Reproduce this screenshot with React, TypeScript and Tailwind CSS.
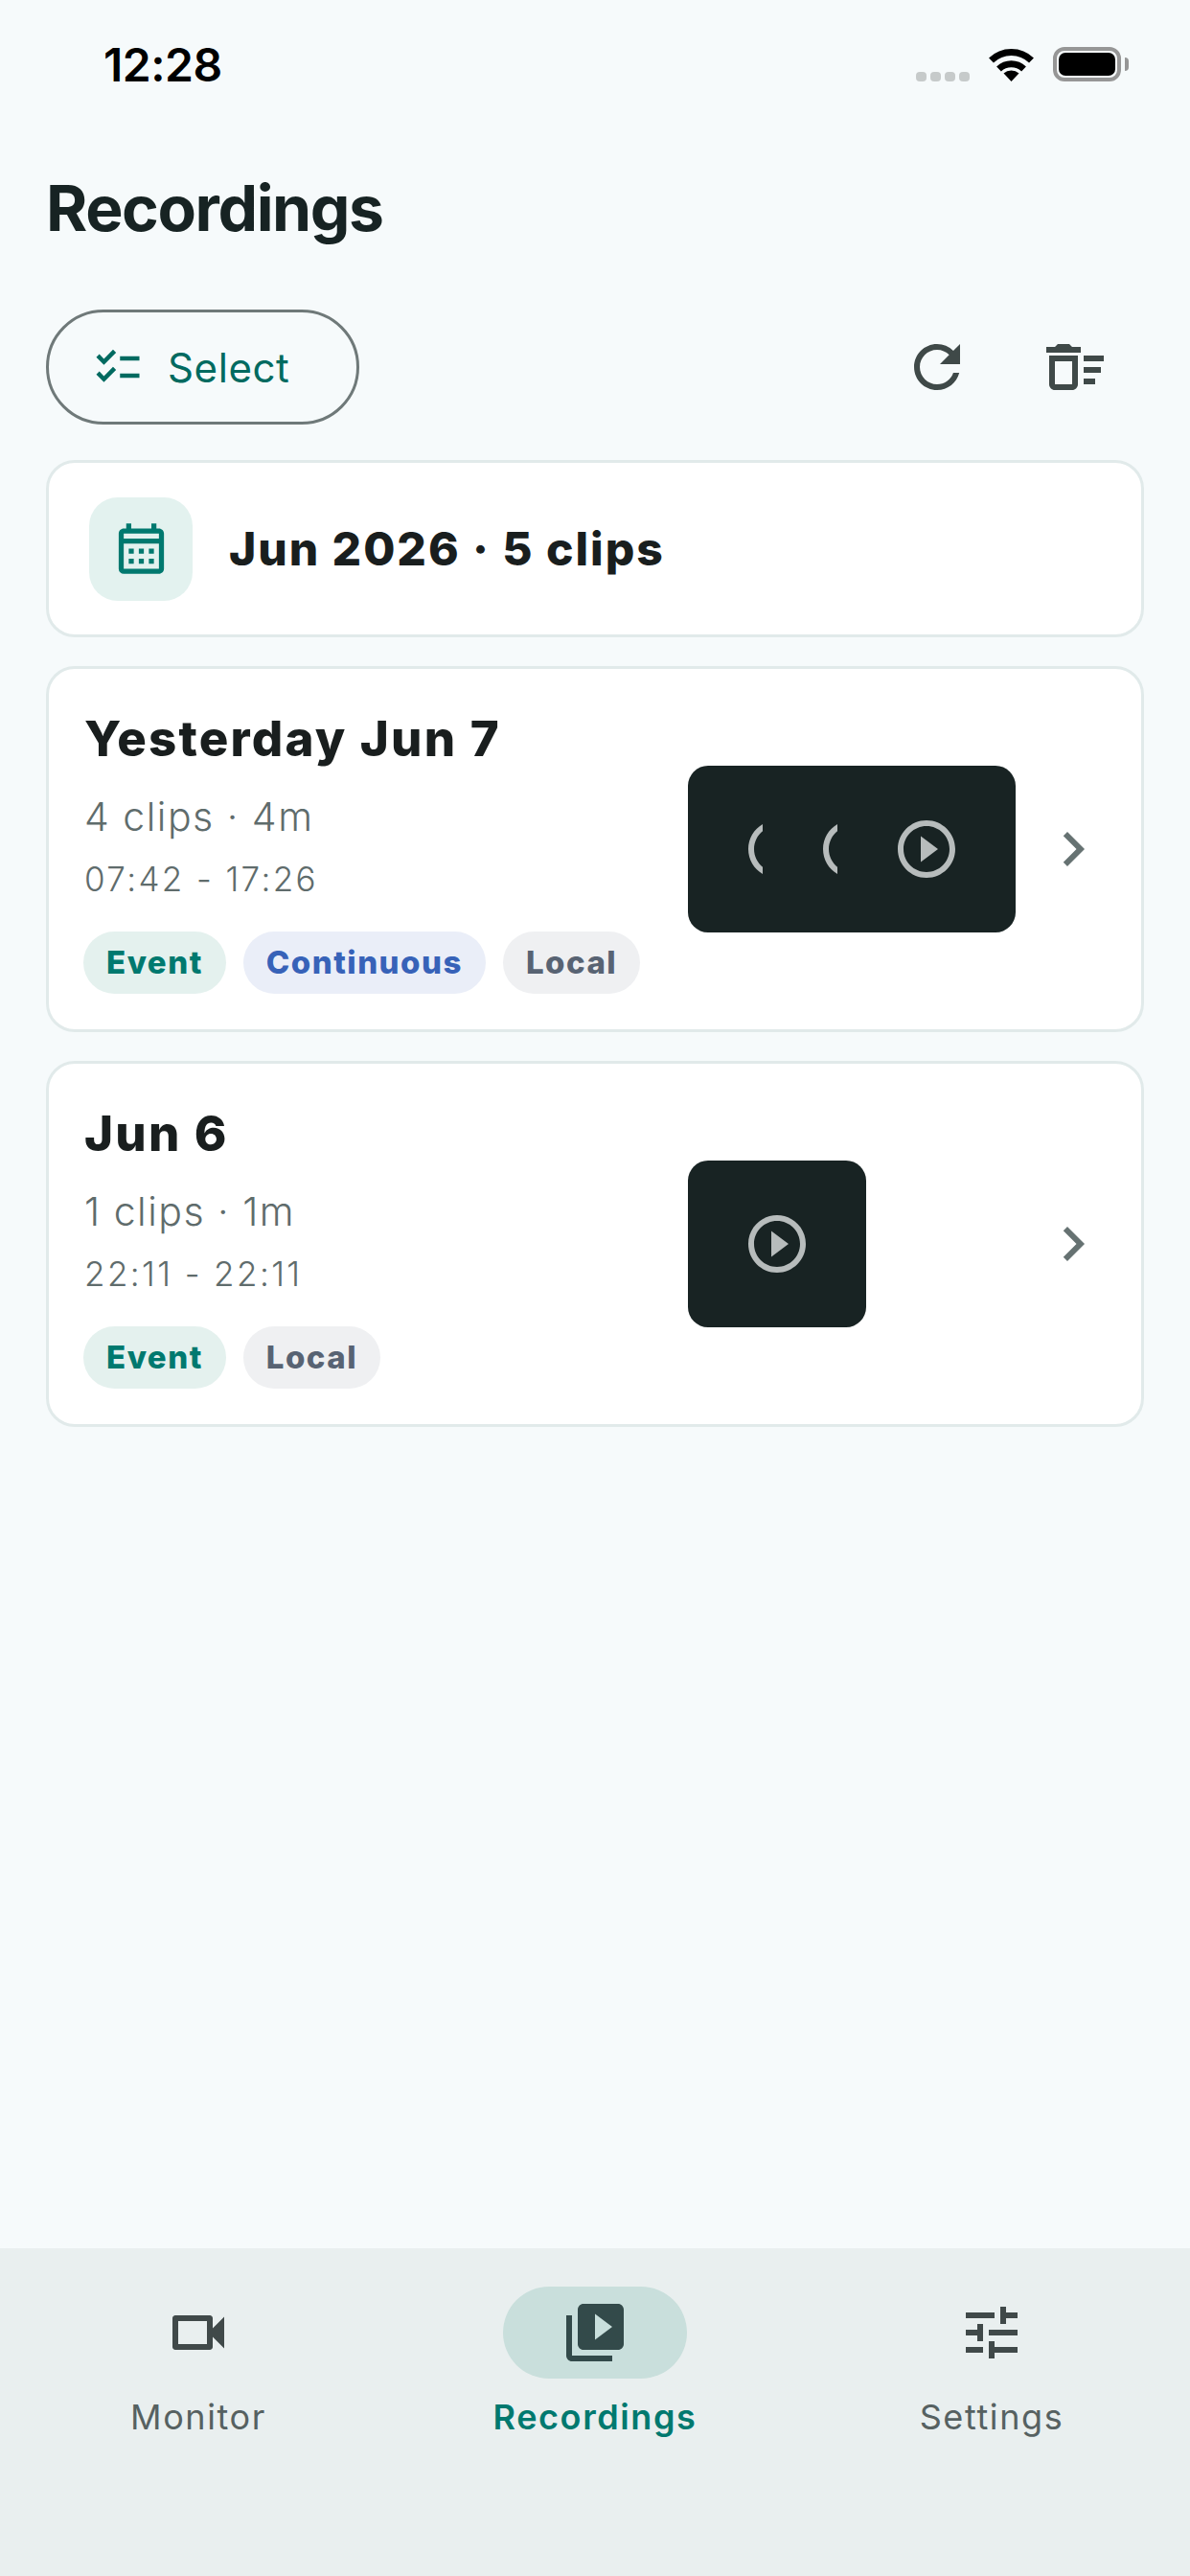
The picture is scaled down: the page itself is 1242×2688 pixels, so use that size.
import React from "react";
import {
  MdChecklist,
  MdChevronRight,
  MdOutlineCalendarMonth,
  MdOutlineDeleteSweep,
  MdOutlinePlayCircleOutline,
  MdOutlineVideocam,
  MdRefresh,
  MdTune,
  MdVideoLibrary,
} from "react-icons/md";

const chipStyles: Record<string, string> = {
  Event: "bg-[#e4f1ee] text-[#00796f]",
  Continuous: "bg-[#eaeef8] text-[#3762b8]",
  Local: "bg-[#eff0f2] text-[#586373]",
};

const StatusBar = () => (
  <div className="h-[136px] flex items-center justify-between pl-[108px] pr-[64px]">
    <span className="text-[48px] font-semibold tracking-[-0.5px] text-black leading-none">12:28</span>
    <div className="flex items-end gap-[20px] h-[36px] mb-[2px]">
      <div className="flex gap-[4px]">
        {[0, 1, 2, 3].map((i) => (
          <div key={i} className="w-[11px] h-[10px] rounded-[4px] bg-[#c6caca]" />
        ))}
      </div>
      <svg width="47" height="36" viewBox="0 0 47 36">
        <path d="M2.5 14 A30 30 0 0 1 44.5 14" fill="none" stroke="#000" strokeWidth="7" />
        <path d="M10.5 23 A19 19 0 0 1 36.5 23" fill="none" stroke="#000" strokeWidth="7" />
        <path d="M23.5 36 L15.5 27.5 A12 12 0 0 1 31.5 27.5 Z" fill="#000" />
      </svg>
      <div className="flex items-center gap-[4px] h-[36px]">
        <div className="w-[71px] h-[36px] border-[4px] border-[#969696] rounded-[12px] p-[2px]">
          <div className="w-full h-full bg-black rounded-[7px]" />
        </div>
        <div className="w-[4px] h-[14px] bg-[#969696] rounded-r-[4px]" />
      </div>
    </div>
  </div>
);

const Toolbar = () => (
  <div className="mt-[25px] mx-[48px] h-[120px] flex items-center justify-between">
    <button className="h-[120px] w-[327px] rounded-full border-[3px] border-[#6f7979] flex items-center pl-[45px] gap-[25px]">
      <MdChecklist size={54} className="text-[#006a60]" />
      <span className="text-[42px] font-normal tracking-[0.6px] text-[#006a60]">Select</span>
    </button>
    <div className="flex text-[#3f4948]">
      <div className="w-[144px] h-[120px] flex items-center justify-center">
        <MdRefresh size={72} />
      </div>
      <div className="w-[144px] h-[120px] flex items-center justify-center">
        <MdOutlineDeleteSweep size={72} />
      </div>
    </div>
  </div>
);

const MonthCard = () => (
  <div className="mt-[37px] mx-[48px] h-[185px] bg-white border-[3px] border-[#e1eaea] rounded-[30px] flex items-center pl-[42px] gap-[38px]">
    <div className="w-[108px] h-[108px] rounded-[30px] bg-[#e3f2ef] flex items-center justify-center">
      <MdOutlineCalendarMonth size={63} className="text-[#00796f]" />
    </div>
    <span className="text-[48px] font-extrabold tracking-[1.95px] text-[#191e1e]">Jun 2026 · 5 clips</span>
  </div>
);

const Thumb = ({ wide }: { wide: boolean }) => (
  <div
    className={`${wide ? "w-[342px]" : "w-[186px]"} h-[174px] rounded-[21px] bg-[#182323] flex items-center justify-center gap-[57px] text-[#b7bcbc]`}
  >
    {wide && (
      <>
        <div className="w-[21px] h-[72px] overflow-hidden shrink-0">
          <MdOutlinePlayCircleOutline size={72} className="max-w-none" />
        </div>
        <div className="w-[21px] h-[72px] overflow-hidden shrink-0">
          <MdOutlinePlayCircleOutline size={72} className="max-w-none" />
        </div>
      </>
    )}
    <MdOutlinePlayCircleOutline size={72} className="shrink-0" />
  </div>
);

const DayCard = ({
  title,
  meta,
  time,
  chips,
  wide,
}: {
  title: string;
  meta: string;
  time: string;
  chips: string[];
  wide: boolean;
}) => (
  <div className="mx-[48px] h-[382px] bg-white border-[3px] border-[#e1eaea] rounded-[30px] flex items-center pl-[36px] pr-[35px]">
    <div className="flex-1 h-full flex flex-col pt-[43px]">
      <div className="h-[60px] leading-[60px] pl-[1px] text-[51px] font-extrabold tracking-[2.2px] text-[#191e1e]">{title}</div>
      <div className="mt-[24px] h-[54px] leading-[54px] pl-[1px] text-[41px] font-light tracking-[1.5px] text-[#5f6c6c]">{meta}</div>
      <div className="mt-[14px] h-[48px] leading-[48px] pl-[1px] text-[35px] font-light tracking-[2.4px] text-[#5f6c6c]">{time}</div>
      <div className="mt-[31px] flex gap-[18px]">
        {chips.map((c) => (
          <span
            key={c}
            className={`h-[65px] leading-[65px] px-[24px] rounded-full text-[33px] font-extrabold tracking-[1.5px] ${chipStyles[c]}`}
          >
            {c}
          </span>
        ))}
      </div>
    </div>
    <div className="w-[366px] shrink-0">
      <Thumb wide={wide} />
    </div>
    <MdChevronRight size={72} className="text-[#667272] shrink-0" />
  </div>
);

const NavItem = ({
  label,
  active,
  icon,
}: {
  label: string;
  active?: boolean;
  icon: React.ReactNode;
}) => (
  <div className="flex flex-col items-center">
    <div className={`w-[192px] h-[96px] rounded-full flex items-center justify-center ${active ? "bg-[#c9dfdc] text-[#334a4a]" : "text-[#404949]"}`}>
      {icon}
    </div>
    <span
      className={`mt-[16px] h-[48px] leading-[48px] text-[36px] tracking-[1.6px] ${active ? "font-semibold text-[#00796f]" : "font-normal text-[#566161]"}`}
    >
      {label}
    </span>
  </div>
);

const BottomNav = () => (
  <div className="h-[342px] shrink-0 bg-[#e9efef] grid grid-cols-3 pt-[40px]">
    <NavItem label="Monitor" icon={<MdOutlineVideocam size={72} />} />
    <NavItem label="Recordings" active icon={<MdVideoLibrary size={72} />} />
    <NavItem label="Settings" icon={<MdTune size={72} />} />
  </div>
);

const App = () => {
  return (
    <div className="w-[1242px] h-[2688px] bg-[#f6fafb] flex flex-col overflow-hidden [font-family:Inter,sans-serif]">
      <div className="flex-1">
        <StatusBar />
        <div className="h-[162px] flex items-center px-[48px]">
          <h1 className="text-[66px] font-bold tracking-[-1.4px] text-[#172323]">Recordings</h1>
        </div>
        <Toolbar />
        <MonthCard />
        <div className="mt-[30px] flex flex-col gap-[30px]">
          <DayCard
            title="Yesterday Jun 7"
            meta="4 clips · 4m"
            time="07:42 - 17:26"
            chips={["Event", "Continuous", "Local"]}
            wide
          />
          <DayCard
            title="Jun 6"
            meta="1 clips · 1m"
            time="22:11 - 22:11"
            chips={["Event", "Local"]}
            wide={false}
          />
        </div>
      </div>
      <BottomNav />
    </div>
  );
};

export default App;
